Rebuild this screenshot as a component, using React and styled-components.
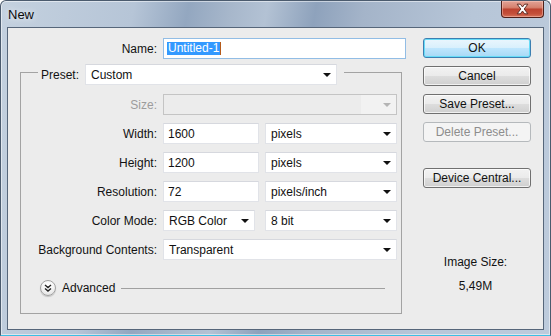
import React from 'react'
import styled, { createGlobalStyle } from 'styled-components'

const GlobalStyle = createGlobalStyle`
  html, body {
    margin: 0;
    padding: 0;
    background: #ffffff;
  }
  body {
    font-family: "Liberation Sans", Arial, sans-serif;
    font-size: 12px;
    color: #111;
  }
`

function Arrow({ disabled }) {
  return <Caret $disabled={disabled} />
}

function Dropdown({ children, width, disabled }) {
  return (
    <Select $width={width} $disabled={disabled}>
      <span>{children}</span>
      <Arrow disabled={disabled} />
    </Select>
  )
}

function CloseGlyph() {
  return (
    <svg width="15" height="12" viewBox="0 0 14 11">
      <path
        d="M2 1 L5 1 L7 3.6 L9 1 L12 1 L8.6 5.5 L12 10 L9 10 L7 7.4 L5 10 L2 10 L5.4 5.5 Z"
        fill="#ffffff"
        stroke="#5a2a22"
        strokeWidth="0.9"
        strokeLinejoin="round"
      />
    </svg>
  )
}

function ExpandGlyph() {
  return (
    <svg width="8" height="8" viewBox="0 0 8 8">
      <path d="M1 1 L4 3.5 L7 1 M1 4.5 L4 7 L7 4.5" fill="none" stroke="#222" strokeWidth="1.4" />
    </svg>
  )
}

export default function App() {
  return (
    <>
      <GlobalStyle />
      <Window>
        <TitleBar>
          <Title>New</Title>
          <CloseButton>
            <CloseGlyph />
          </CloseButton>
        </TitleBar>
        <Content>
          <FormColumn>
            <NameRow>
              <Label $width={137}>Name:</Label>
              <NameInput>
                <Selected>Untitled-1</Selected>
                <Cursor />
              </NameInput>
            </NameRow>
            <Group>
              <Legend>
                <Label>Preset:</Label>
                <Dropdown width={252}>Custom</Dropdown>
              </Legend>
              <Rows>
                <Label $muted>Size:</Label>
                <Dropdown width={234} disabled />

                <Label>Width:</Label>
                <Pair>
                  <TextBox>1600</TextBox>
                  <Dropdown width={132}>pixels</Dropdown>
                </Pair>

                <Label>Height:</Label>
                <Pair>
                  <TextBox>1200</TextBox>
                  <Dropdown width={132}>pixels</Dropdown>
                </Pair>

                <Label>Resolution:</Label>
                <Pair>
                  <TextBox>72</TextBox>
                  <Dropdown width={132}>pixels/inch</Dropdown>
                </Pair>

                <Label>Color Mode:</Label>
                <Pair>
                  <Dropdown width={92}>RGB Color</Dropdown>
                  <Dropdown width={132}>8 bit</Dropdown>
                </Pair>

                <Label>Background Contents:</Label>
                <Dropdown width={234}>Transparent</Dropdown>
              </Rows>
              <AdvancedRow>
                <RoundButton>
                  <ExpandGlyph />
                </RoundButton>
                <span>Advanced</span>
                <Rule />
              </AdvancedRow>
            </Group>
          </FormColumn>
          <ButtonColumn>
            <Button $primary>OK</Button>
            <Button>Cancel</Button>
            <Button>Save Preset...</Button>
            <Button $disabled>Delete Preset...</Button>
            <Button $gap={26}>Device Central...</Button>
            <Info>
              <div>Image Size:</div>
              <div>5,49M</div>
            </Info>
          </ButtonColumn>
        </Content>
      </Window>
    </>
  )
}

const Window = styled.div`
  width: 551px;
  height: 336px;
  box-sizing: border-box;
  display: flex;
  flex-direction: column;
  padding: 0 6px 5px 6px;
  border: 1px solid #4b5b6e;
  border-bottom-color: #3cbfe4;
  border-radius: 6px 6px 0 0;
  background: linear-gradient(
    100deg,
    #c4d1df 0%,
    #b6c5d7 22%,
    #93a7c0 31%,
    #a7b7cb 38%,
    #b3c2d4 44%,
    #8ea2bc 52%,
    #a4b4c9 60%,
    #b7c6d8 78%,
    #bdcbdc 100%
  );
  box-shadow: inset 0 0 0 1px rgba(255, 255, 255, 0.5);
  overflow: hidden;
`

const TitleBar = styled.div`
  height: 26px;
  display: flex;
  align-items: flex-start;
  justify-content: space-between;
`

const Title = styled.div`
  padding: 6px 0 0 1px;
  font-size: 13px;
  color: #0b0b0b;
  text-shadow: 0 0 6px rgba(255, 255, 255, 0.9);
`

const CloseButton = styled.div`
  width: 43px;
  height: 17px;
  box-sizing: border-box;
  display: flex;
  align-items: center;
  justify-content: center;
  border: 1px solid #4e1f19;
  border-top: none;
  border-radius: 0 0 4px 4px;
  background: linear-gradient(
    #e2a296 0%,
    #d6826f 40%,
    #bd4330 52%,
    #c4503a 80%,
    #d6745c 100%
  );
  box-shadow: inset 0 0 0 1px rgba(255, 210, 200, 0.45);
`

const Content = styled.div`
  flex: 1;
  display: flex;
  border: 1px solid #56667a;
  background: #ececec;
`

const FormColumn = styled.div`
  padding: 10px 0 0 12px;
  display: flex;
  flex-direction: column;
`

const NameRow = styled.div`
  display: flex;
  align-items: center;
  gap: 6px;
  height: 21px;
`

const Label = styled.div`
  ${({ $width }) => ($width ? `width: ${$width}px;` : '')}
  text-align: right;
  white-space: nowrap;
  color: ${({ $muted }) => ($muted ? '#9c9c9c' : '#121212')};
  align-self: center;
`

const NameInput = styled.div`
  width: 243px;
  height: 21px;
  box-sizing: border-box;
  display: flex;
  align-items: center;
  padding-left: 3px;
  background: #ffffff;
  border: 1px solid #92bde5;
`

const Selected = styled.span`
  background: #3399ff;
  color: #ffffff;
  padding: 0 1px;
  line-height: 13px;
`

const Cursor = styled.span`
  width: 1px;
  height: 13px;
  background: #b55a1a;
`

const Group = styled.div`
  margin-top: 13px;
  width: 382px;
  box-sizing: border-box;
  border: 1px solid #a3a3a3;
  padding: 0 3px 17px 0;
  display: flex;
  flex-direction: column;
`

const Legend = styled.div`
  align-self: flex-start;
  margin: -9px 0 0 17px;
  padding: 0 7px 0 3px;
  display: flex;
  gap: 6px;
  background: #ececec;
`

const Rows = styled.div`
  margin-top: 9px;
  display: grid;
  grid-template-columns: 136px 234px;
  grid-template-rows: repeat(6, 21px);
  column-gap: 6px;
  row-gap: 8px;
`

const Pair = styled.div`
  display: flex;
  justify-content: space-between;
`

const field = `
  height: 21px;
  box-sizing: border-box;
  display: flex;
  align-items: center;
  background: #ffffff;
  border: 1px solid #e1e3e8;
  border-top-color: #d6d8de;
`

const TextBox = styled.div`
  ${field}
  width: 96px;
  padding-left: 4px;
`

const Select = styled.div`
  ${field}
  width: ${({ $width }) => $width}px;
  padding: 0 5px 0 5px;
  justify-content: space-between;
  ${({ $disabled }) =>
    $disabled
      ? `
    background: linear-gradient(90deg, #ececec 0 85%, #f2f2f2 85%);
    border-color: #c4c4c4;
  `
      : ''}
`

const Caret = styled.span`
  width: 0;
  height: 0;
  border-left: 4px solid transparent;
  border-right: 4px solid transparent;
  border-top: 4px solid ${({ $disabled }) => ($disabled ? '#b4b4b4' : '#111')};
  margin-top: 1px;
`

const AdvancedRow = styled.div`
  margin-top: 20px;
  padding: 0 13px 0 19px;
  height: 16px;
  display: flex;
  align-items: center;
  gap: 6px;
  color: #121212;
`

const RoundButton = styled.div`
  width: 16px;
  height: 16px;
  box-sizing: border-box;
  border-radius: 50%;
  border: 1px solid #a2a2a2;
  background: radial-gradient(circle at 50% 30%, #ffffff 0%, #f4f4f4 50%, #d9d9d9 100%);
  box-shadow: 0 1px 1px rgba(0, 0, 0, 0.18);
  display: flex;
  align-items: center;
  justify-content: center;
`

const Rule = styled.div`
  flex: 1;
  height: 1px;
  background: #a0a0a0;
`

const ButtonColumn = styled.div`
  margin-left: 17px;
  padding-top: 10px;
  width: 108px;
  display: flex;
  flex-direction: column;
  gap: 8px;
`

const Button = styled.div`
  height: 20px;
  box-sizing: border-box;
  display: flex;
  align-items: center;
  justify-content: center;
  border-radius: 3px;
  ${({ $gap }) => ($gap ? `margin-top: ${$gap - 8}px;` : '')}
  ${({ $primary, $disabled }) =>
    $primary
      ? `
    border: 1px solid #3c7fb1;
    background: linear-gradient(#eaf6fd 0%, #d9f0fc 48%, #bee6fd 52%, #a7d9f5 100%);
    box-shadow: inset 0 0 0 1px #67dcf7;
    color: #111;
  `
      : $disabled
      ? `
    border: 1px solid #b5b9bc;
    background: #f4f4f4;
    color: #8d8d8d;
  `
      : `
    border: 1px solid #707070;
    background: linear-gradient(#f2f2f2 0%, #ebebeb 48%, #dddddd 52%, #cfcfcf 100%);
    box-shadow: inset 0 0 0 1px rgba(255, 255, 255, 0.7);
    color: #111;
  `}
`

const Info = styled.div`
  margin-top: 59px;
  display: flex;
  flex-direction: column;
  align-items: center;
  gap: 10px;
  line-height: 14px;
  color: #121212;
  padding-right: 3px;
`
